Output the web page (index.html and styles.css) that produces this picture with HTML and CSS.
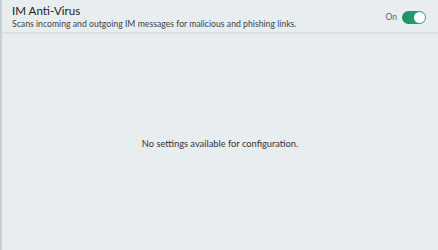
FILE: index.html
```html
<!DOCTYPE html>
<html>
    <head>
        <meta charset="utf-8">
        <title>IM Anti-Virus</title>
        <link rel="stylesheet" href="styles.css">
    </head>
    <body>
        <div class="panel">
            <header class="panel-head">
                <div class="head-text">
                    <h1 class="head-title">IM Anti-Virus</h1>
                    <p class="head-desc">Scans incoming and outgoing IM messages for malicious and phishing links.</p>
                </div>
                <div class="head-switch">
                    <span class="switch-label">On</span>
                    <span class="switch switch-on"><span class="switch-knob"></span></span>
                </div>
            </header>
            <div class="panel-body">
                <p class="empty-msg">No settings available for configuration.</p>
            </div>
        </div>
    </body>
</html>
```

FILE: styles.css
```css
html, body {
    margin: 0;
    padding: 0;
    height: 100%;
}
body {
    background: #e8edf0;
    font-family: Lato, "Open Sans", sans-serif;
    color: #333;
}
.panel {
    height: 100%;
    display: flex;
    flex-direction: column;
    border-left: 2px solid #c9d0d4;
    box-sizing: border-box;
}
.panel-head {
    display: flex;
    align-items: center;
    justify-content: space-between;
    padding: 2px 12px 0 10px;
    height: 34px;
    box-sizing: border-box;
    border-bottom: 2px solid #dbe1e4;
}
.head-title {
    margin: 0;
    font-size: 11.6px;
    font-weight: normal;
    line-height: 14px;
    color: #222;
}
.head-desc {
    margin: 0;
    font-size: 8.7px;
    line-height: 12px;
    color: #444;
}
.head-switch {
    display: flex;
    align-items: center;
    gap: 5px;
}
.switch-label {
    font-size: 8.5px;
    color: #666;
}
.switch {
    width: 24px;
    height: 13px;
    border-radius: 7px;
    background: linear-gradient(90deg, #1d8c63, #2faa7c);
    display: flex;
    align-items: center;
    justify-content: flex-end;
    padding: 0 1px;
    box-sizing: border-box;
}
.switch-knob {
    width: 11px;
    height: 11px;
    border-radius: 50%;
    background: #fff;
}
.panel-body {
    flex: 1;
    display: flex;
    align-items: center;
    justify-content: center;
    padding-top: 2px;
}
.empty-msg {
    margin: 0;
    font-size: 9.3px;
    color: #333;
}
```
